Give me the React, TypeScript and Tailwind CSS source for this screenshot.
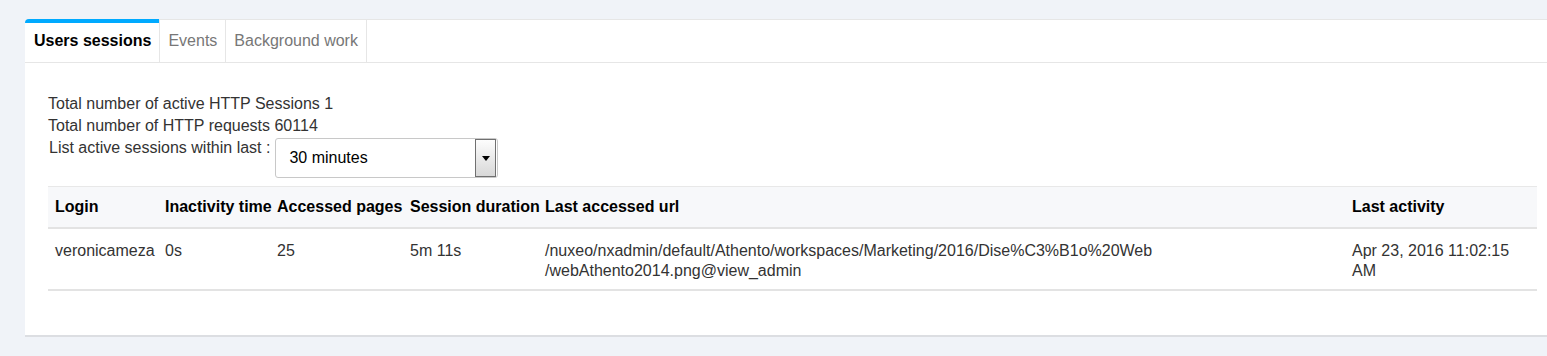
import React from "react";

export default function App() {
  const font = { fontFamily: '"Liberation Sans", Arial, sans-serif' };
  return (
    <div className="w-[1547px] h-[356px] bg-[#f0f3f8] overflow-hidden pt-[19px] pl-[25px]" style={font}>
      <div className="w-[1522px] bg-white rounded-tl-[4px] border-b-2 border-[#dcdee2] pb-[44px]">
        {/* Tab bar */}
        <div className="flex h-[44px] border-t border-b border-[#e6e6e6] rounded-tl-[4px]">
          <div className="relative flex items-center pl-[9px] pr-[8px] text-[16px] font-bold text-black border-r border-[#e6e6e6]">
            <div className="absolute left-0 right-0 top-[-1px] h-[4px] bg-[#00aaff] rounded-tl-[4px]" />
            Users sessions
          </div>
          <div className="flex items-center px-[8px] text-[16px] text-[#777] border-r border-[#e6e6e6]">Events</div>
          <div className="flex items-center px-[8px] text-[16px] text-[#777] border-r border-[#e6e6e6]">Background work</div>
        </div>

        {/* Content */}
        <div className="pl-[23px] pr-[10px] pt-[30px]">
          <div className="text-[16px] leading-[22px] text-[#333]">Total number of active HTTP Sessions 1</div>
          <div className="text-[16px] leading-[22px] text-[#333]">Total number of HTTP requests 60114</div>
          <div className="flex items-start">
            <div className="text-[16px] leading-[22px] text-[#333] pl-[1px]">List active sessions within last :</div>
            <div className="ml-[5px] mt-[1px] w-[223px] h-[40px] border border-[#c8c8c8] rounded-[3px] flex items-center justify-between pl-[13px] pr-[1px]">
              <span className="text-[16px] text-black">30 minutes</span>
              <div className="w-[21px] h-[38px] border border-[#707070] bg-gradient-to-b from-[#fdfdfd] to-[#d8d8d8] flex items-center justify-center">
                <div className="w-0 h-0 border-l-[4px] border-r-[4px] border-t-[5px] border-l-transparent border-r-transparent border-t-black" />
              </div>
            </div>
          </div>

          <table className="mt-[8px] w-[1489px] table-fixed border-collapse text-[16px]">
            <colgroup>
              <col className="w-[110px]" />
              <col className="w-[112px]" />
              <col className="w-[133px]" />
              <col className="w-[135px]" />
              <col className="w-[807px]" />
              <col className="w-[192px]" />
            </colgroup>
            <thead>
              <tr className="bg-[#f7f8fa] border-t border-[#e8e8e8] border-b-2 border-b-[#e3e3e3]">
                {["Login", "Inactivity time", "Accessed pages", "Session duration", "Last accessed url", "Last activity"].map((h) => (
                  <th key={h} className="h-[41px] pl-[7px] pr-0 pt-[1px] text-left font-bold text-black whitespace-nowrap leading-[20px]">
                    {h}
                  </th>
                ))}
              </tr>
            </thead>
            <tbody>
              <tr className="border-b-2 border-[#e3e3e3] text-[#333] align-top">
                <td className="pl-[7px] pt-[12px] pb-[8px] leading-[20px]">veronicameza</td>
                <td className="pl-[7px] pt-[12px] pb-[8px] leading-[20px]">0s</td>
                <td className="pl-[7px] pt-[12px] pb-[8px] leading-[20px]">25</td>
                <td className="pl-[7px] pt-[12px] pb-[8px] leading-[20px]">5m 11s</td>
                <td className="pl-[7px] pt-[12px] pb-[8px] leading-[20px]">
                  /nuxeo/nxadmin/default/Athento/workspaces/Marketing/2016/Dise%C3%B1o%20Web
                  <br />
                  /webAthento2014.png@view_admin
                </td>
                <td className="pl-[7px] pr-[10px] pt-[12px] pb-[8px] leading-[20px]">Apr 23, 2016 11:02:15 AM</td>
              </tr>
            </tbody>
          </table>
        </div>
      </div>
    </div>
  );
}
